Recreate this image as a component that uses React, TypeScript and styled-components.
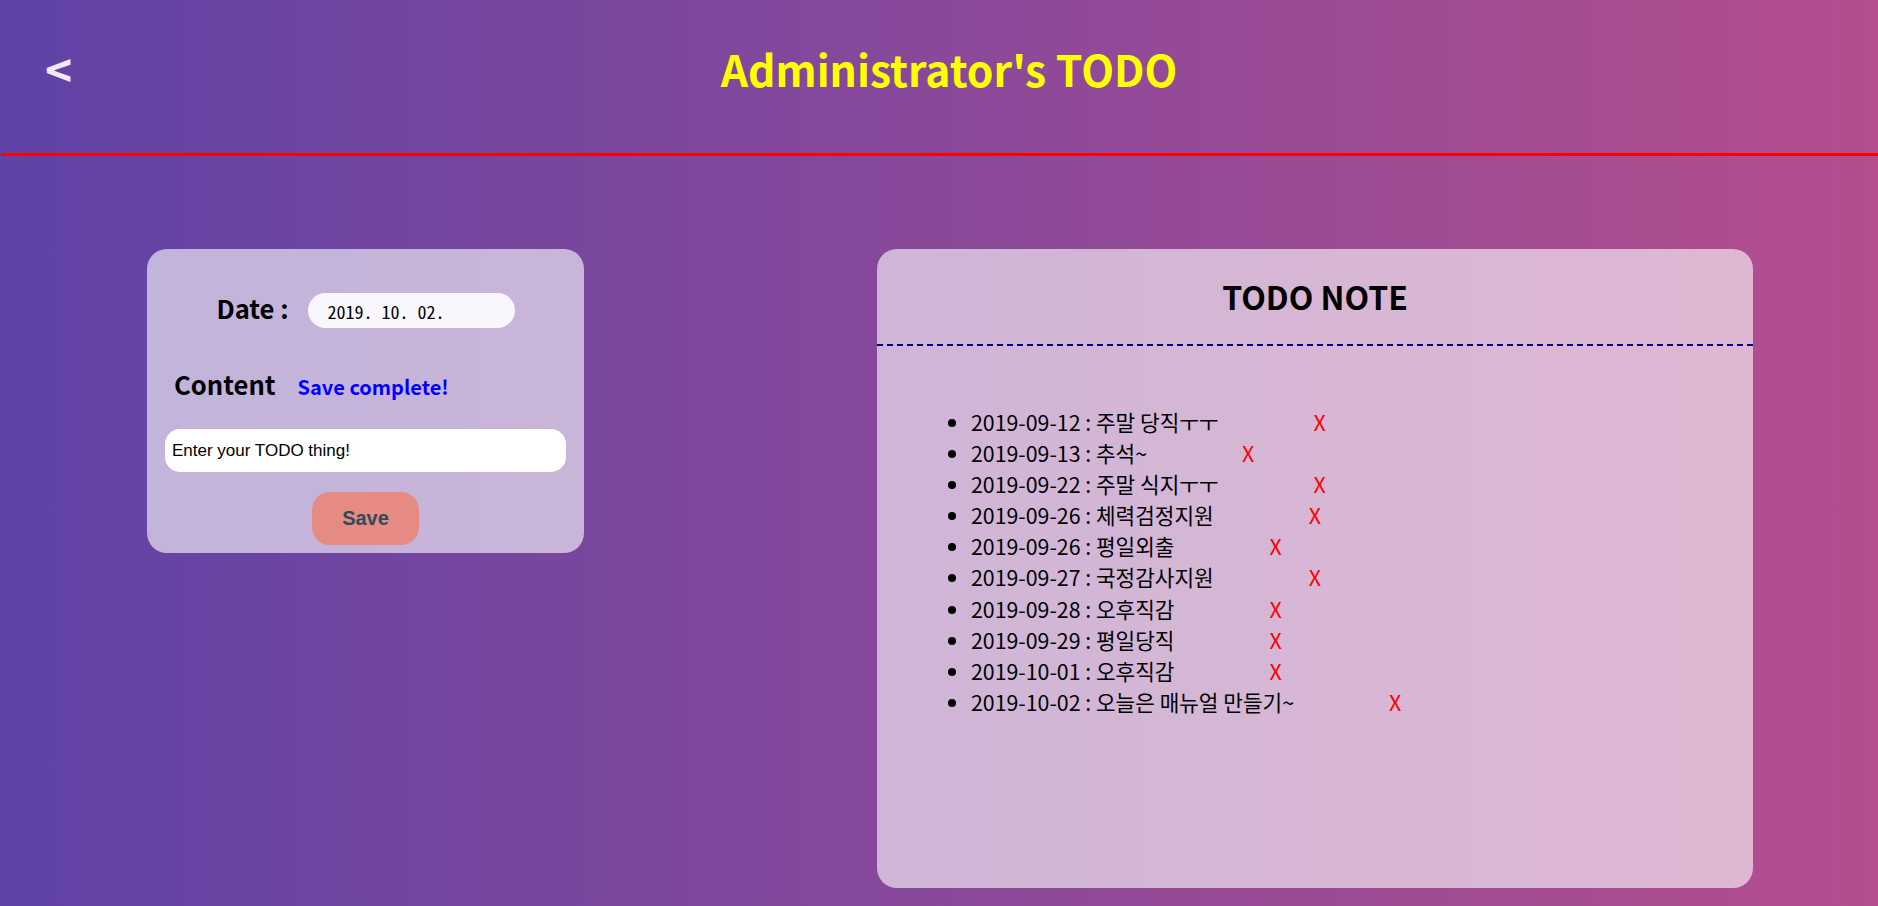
import React from "react";
import styled, { createGlobalStyle } from "styled-components";

const GlobalStyle = createGlobalStyle`
  html, body {
    margin: 0;
    padding: 0;
  }
  body {
    min-height: 100vh;
    background: linear-gradient(to right, #5f43a6, #b44e8e);
    font-family: "Noto Sans CJK KR", "Noto Sans", sans-serif;
  }
`;

const Page = styled.div`
  min-height: 906px;
  display: flex;
  flex-direction: column;
`;

const Header = styled.header`
  height: 153px;
  display: flex;
  align-items: flex-start;
  border-bottom: 3px solid #ff0000;
  margin-left: 1px;
`;

const BackButton = styled.span`
  width: 72px;
  box-sizing: border-box;
  padding: 41px 0 0 44px;
  font-size: 46px;
  font-weight: 700;
  line-height: 1.2;
  color: #efe8f7;
  cursor: pointer;
`;

const Title = styled.h1`
  flex: 1;
  margin: 0;
  padding: 38px 53px 0 0;
  text-align: center;
  font-size: 42.67px;
  font-weight: 700;
  line-height: normal;
  color: #ffff00;
`;

const Main = styled.main`
  display: flex;
  align-items: flex-start;
  padding: 93px 125px 18px 147px;
  gap: 293px;
`;

const Card = styled.section`
  background: rgba(255, 255, 255, 0.6);
  border-radius: 20px;
  box-sizing: border-box;
`;

const EditorCard = styled(Card)`
  width: 437px;
  padding: 44px 18px 8px;
  display: flex;
  flex-direction: column;
`;

const DateRow = styled.div`
  display: flex;
  justify-content: center;
  align-items: center;
  gap: 19px;
  height: 35px;
`;

const Label = styled.span<{ $raise?: number }>`
  font-size: 25.6px;
  font-weight: 700;
  color: #000;
  line-height: normal;
  margin-bottom: ${(p) => (p.$raise ? `${p.$raise}px` : "0")};
`;

const DateField = styled.input`
  width: 207px;
  height: 35px;
  box-sizing: border-box;
  border: none;
  outline: none;
  border-radius: 18px;
  background: #f9f7fb;
  padding: 0 0 0 20px;
  font-family: "Noto Sans Mono CJK KR", "Liberation Mono", monospace;
  font-size: 18px;
  color: #000;
`;

const ContentRow = styled.div`
  display: flex;
  align-items: baseline;
  gap: 22px;
  margin-top: 37px;
  padding-left: 9px;
`;

const Status = styled.span`
  font-size: 20px;
  font-weight: 700;
  color: #0000ff;
`;

const TodoInput = styled.input`
  margin-top: 27px;
  width: 401px;
  height: 43px;
  box-sizing: border-box;
  border: none;
  outline: none;
  border-radius: 15px;
  background: #ffffff;
  padding: 0 7px;
  font-family: "Liberation Sans", Arial, sans-serif;
  font-size: 17px;
  color: #000;
`;

const SaveButton = styled.button`
  align-self: center;
  margin-top: 20px;
  width: 107px;
  height: 53px;
  border: none;
  border-radius: 18px;
  background: #e68a84;
  font-family: "Liberation Sans", Arial, sans-serif;
  font-size: 20px;
  font-weight: 700;
  color: #2f4a5a;
  cursor: pointer;
`;

const NoteCard = styled(Card)`
  width: 876px;
  height: 639px;
  padding-top: 24px;
`;

const NoteTitle = styled.h2`
  margin: 0;
  text-align: center;
  font-size: 32px;
  font-weight: 700;
  line-height: normal;
  color: #000;
`;

const Divider = styled.hr`
  margin: 25px 0 0;
  border: none;
  border-top: 2px dashed #00008b;
`;

const TodoList = styled.ul`
  margin: 60px 0 0 54px;
  padding-left: 40px;
  font-size: 21.33px;
  line-height: 31.1px;
  color: #000;
`;

const TodoItem = styled.li``;

const Delete = styled.span`
  margin-left: 95px;
  color: #ff0000;
  cursor: pointer;
`;

const todos = [
  { date: "2019-09-12", text: "주말 당직ㅜㅜ" },
  { date: "2019-09-13", text: "추석~" },
  { date: "2019-09-22", text: "주말 식지ㅜㅜ" },
  { date: "2019-09-26", text: "체력검정지원" },
  { date: "2019-09-26", text: "평일외출" },
  { date: "2019-09-27", text: "국정감사지원" },
  { date: "2019-09-28", text: "오후직감" },
  { date: "2019-09-29", text: "평일당직" },
  { date: "2019-10-01", text: "오후직감" },
  { date: "2019-10-02", text: "오늘은 매뉴얼 만들기~" },
];

export default function App() {
  return (
    <>
      <GlobalStyle />
      <Page>
        <Header>
          <BackButton>&lt;</BackButton>
          <Title>Administrator's TODO</Title>
        </Header>
        <Main>
          <EditorCard>
            <DateRow>
              <Label $raise={7}>Date :</Label>
              <DateField readOnly value="2019. 10. 02." />
            </DateRow>
            <ContentRow>
              <Label>Content</Label>
              <Status>Save complete!</Status>
            </ContentRow>
            <TodoInput readOnly value="Enter your TODO thing!" />
            <SaveButton>Save</SaveButton>
          </EditorCard>
          <NoteCard>
            <NoteTitle>TODO NOTE</NoteTitle>
            <Divider />
            <TodoList>
              {todos.map((t, i) => (
                <TodoItem key={i}>
                  {t.date} : {t.text}
                  <Delete>X</Delete>
                </TodoItem>
              ))}
            </TodoList>
          </NoteCard>
        </Main>
      </Page>
    </>
  );
}
